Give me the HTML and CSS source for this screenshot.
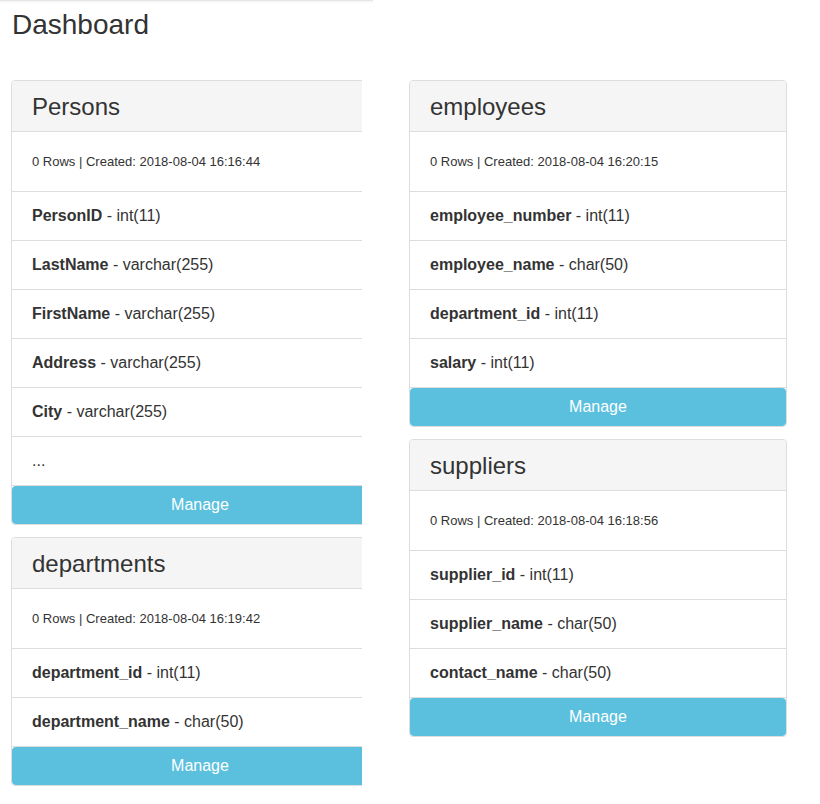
FILE: index.html
```html
<!DOCTYPE html>
<html>
<head>
<meta charset="utf-8">
<title>Dashboard</title>
<link rel="stylesheet" href="styles.css">
</head>
<body>
<div class="topbar"></div>
<main class="page">
  <h1 class="title">Dashboard</h1>
  <div class="columns">
    <div class="col col-clip">
      <section class="panel">
        <div class="panel-head">Persons</div>
        <div class="meta">0 Rows | Created: 2018-08-04 16:16:44</div>
        <div class="row"><b>PersonID</b> - int(11)</div>
        <div class="row"><b>LastName</b> - varchar(255)</div>
        <div class="row"><b>FirstName</b> - varchar(255)</div>
        <div class="row"><b>Address</b> - varchar(255)</div>
        <div class="row"><b>City</b> - varchar(255)</div>
        <div class="row">...</div>
        <a class="btn">Manage</a>
      </section>
      <section class="panel">
        <div class="panel-head">departments</div>
        <div class="meta">0 Rows | Created: 2018-08-04 16:19:42</div>
        <div class="row"><b>department_id</b> - int(11)</div>
        <div class="row"><b>department_name</b> - char(50)</div>
        <a class="btn">Manage</a>
      </section>
    </div>
    <div class="col">
      <section class="panel">
        <div class="panel-head">employees</div>
        <div class="meta">0 Rows | Created: 2018-08-04 16:20:15</div>
        <div class="row"><b>employee_number</b> - int(11)</div>
        <div class="row"><b>employee_name</b> - char(50)</div>
        <div class="row"><b>department_id</b> - int(11)</div>
        <div class="row"><b>salary</b> - int(11)</div>
        <a class="btn">Manage</a>
      </section>
      <section class="panel">
        <div class="panel-head">suppliers</div>
        <div class="meta">0 Rows | Created: 2018-08-04 16:18:56</div>
        <div class="row"><b>supplier_id</b> - int(11)</div>
        <div class="row"><b>supplier_name</b> - char(50)</div>
        <div class="row"><b>contact_name</b> - char(50)</div>
        <a class="btn">Manage</a>
      </section>
    </div>
  </div>
</main>
</body>
</html>
```
FILE: styles.css
```css
html, body {
  margin: 0;
  padding: 0;
  background: #fff;
}
body {
  font-family: "Liberation Sans", Arial, Helvetica, sans-serif;
  color: #333;
}
.topbar {
  width: 373px;
  height: 1px;
  background: #e6e6e6;
  box-shadow: 0 1px 2px rgba(0, 0, 0, 0.08);
}
.page {
  padding: 0 11px;
}
.title {
  margin: 9px 0 0 1px;
  font-size: 28px;
  line-height: 30px;
  font-weight: normal;
}
.columns {
  display: flex;
  align-items: flex-start;
  gap: 47px;
  margin-top: 40px;
}
.col {
  width: 378px;
  display: flex;
  flex-direction: column;
  gap: 12px;
}
.col-clip {
  width: 351px;
  overflow: hidden;
}
.panel {
  width: 378px;
  box-sizing: border-box;
  flex: none;
  border: 1px solid #ddd;
  border-radius: 4px;
  overflow: hidden;
}
.panel-head {
  background: #f5f5f5;
  border-bottom: 1px solid #ddd;
  padding: 13px 20px 11px;
  font-size: 24px;
  line-height: 26px;
}
.meta {
  padding: 20px;
  font-size: 13px;
  line-height: 19px;
  border-bottom: 1px solid #ddd;
}
.row {
  padding: 12px 20px 13px;
  font-size: 16px;
  line-height: 23px;
  border-bottom: 1px solid #ddd;
}
.row b {
  font-weight: bold;
}
.btn {
  display: block;
  background: #5bc0de;
  color: #fff;
  text-align: center;
  font-size: 16px;
  line-height: 22px;
  padding: 8px 0;
  border-radius: 4px;
  cursor: pointer;
}
```
